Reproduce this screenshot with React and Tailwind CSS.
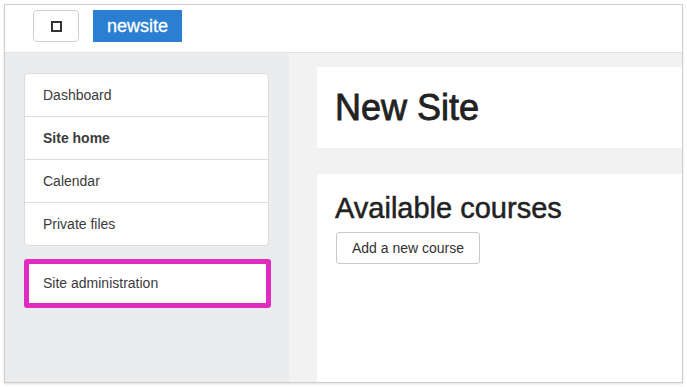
export default function App() {
  const links = [
    { label: 'Dashboard' },
    { label: 'Site home', bold: true },
    { label: 'Calendar' },
    { label: 'Private files' },
  ]

  return (
    <div className="w-[687px] h-[387px] bg-white p-[4px] font-['Liberation_Sans',Arial,sans-serif]">
      <div className="h-full flex flex-col overflow-hidden border border-[#cdcdcd] shadow-[0_1px_2px_rgba(0,0,0,0.12)]">
        <header className="h-[48px] shrink-0 flex items-start gap-[14px] pt-[5px] pl-[28px] bg-white border-b border-[#e2e2e2]">
          <button className="w-[46px] h-[32px] flex items-center justify-center rounded-[4px] border border-[#cfcfcf] bg-white">
            <span className="block w-[11px] h-[11px] border-2 border-[#333]" />
          </button>
          <div className="h-[32px] px-[14px] flex items-center bg-[#2a7fd3] text-white text-[18px] [-webkit-text-stroke:0.3px_#fff]">newsite</div>
        </header>

        <div className="flex flex-1 min-h-0">
          <aside className="w-[284px] shrink-0 bg-[#ebecee] pt-[20px] pl-[19px]">
            <ul className="w-[245px] bg-white border border-[#dcdcdc] rounded-[4px]">
              {links.map((link, i) => (
                <li
                  key={link.label}
                  className={
                    'flex items-center pl-[18px] text-[14px] text-[#3b3b3b] ' +
                    (i > 0 ? 'h-[43px] border-t border-[#dcdcdc] ' : 'h-[42px] ') +
                    (link.bold ? 'font-bold' : '')
                  }
                >
                  {link.label}
                </li>
              ))}
            </ul>
            <div className="mt-[13px] w-[247px] h-[49px] rounded-[3px] border-[5px] border-[#e02ac0] bg-white flex items-center pl-[14px] text-[14px] text-[#3b3b3b]">
              Site administration
            </div>
          </aside>

          <main className="flex-1 bg-[#f2f2f2] pt-[14px] pl-[28px]">
            <section className="h-[81px] bg-white flex items-center pl-[18px]">
              <h1 className="text-[36px] leading-[40px] text-[#222] [-webkit-text-stroke:0.8px_#222]">New Site</h1>
            </section>
            <section className="mt-[26px] h-[220px] bg-white pl-[18px] pt-[17px]">
              <h2 className="text-[29px] leading-[34px] text-[#222] [-webkit-text-stroke:0.5px_#222]">Available courses</h2>
              <button className="mt-[7px] ml-[1px] h-[32px] px-[15px] rounded-[3px] border border-[#c9c9c9] bg-white text-[14px] text-[#333]">
                Add a new course
              </button>
            </section>
          </main>
        </div>
      </div>
    </div>
  )
}
